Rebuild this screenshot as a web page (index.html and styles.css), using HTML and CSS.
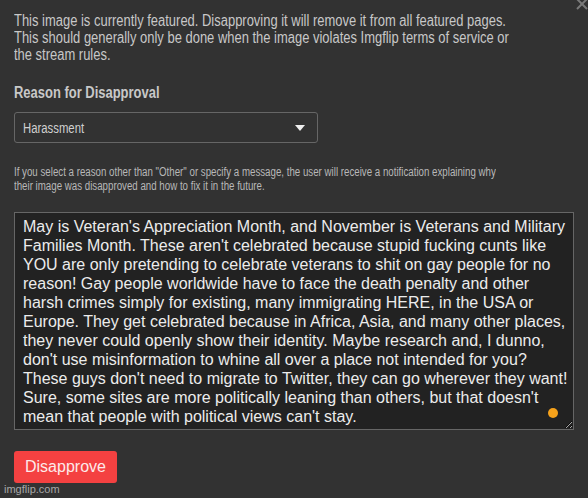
FILE: index.html
```html
<!DOCTYPE html>
<html lang="en">
<head>
    <meta charset="UTF-8">
    <title>Disapprove Image</title>
    <link rel="stylesheet" href="styles.css">
</head>
<body>
    <div class="popup">
        <svg class="close" width="14" height="14" viewBox="0 0 14 14"><path d="M2 2 L12 12 M12 2 L2 12" stroke="#7a7a7a" stroke-width="2"/></svg>

        <p class="intro narrow">This image is currently featured. Disapproving it will remove it from all featured pages.<br>This should generally only be done when the image violates Imgflip terms of service or<br>the stream rules.</p>

        <div class="label"><span class="narrow">Reason for Disapproval</span></div>
        <div class="select" role="listbox">
            <span class="narrow select-text">Harassment</span>
            <svg class="arrow" width="10" height="6" viewBox="0 0 10 6"><path d="M0 0 H10 L5 6 Z" fill="#eee"/></svg>
        </div>

        <p class="note narrow">If you select a reason other than "Other" or specify a message, the user will receive a notification explaining why<br>their image was disapproved and how to fix it in the future.</p>

        <div class="msg-wrap">
            <textarea class="msg">May is Veteran's Appreciation Month, and November is Veterans and Military Families Month. These aren't celebrated because stupid fucking cunts like YOU are only pretending to celebrate veterans to shit on gay people for no reason! Gay people worldwide have to face the death penalty and other harsh crimes simply for existing, many immigrating HERE, in the USA or Europe. They get celebrated because in Africa, Asia, and many other places, they never could openly show their identity. Maybe research and, I dunno, don't use misinformation to whine all over a place not intended for you? These guys don't need to migrate to Twitter, they can go wherever they want! Sure, some sites are more politically leaning than others, but that doesn't mean that people with political views can't stay.</textarea>
            <span class="dot"></span>
        </div>

        <button class="btn">Disapprove</button>
    </div>
    <div class="watermark">imgflip.com</div>
</body>
</html>
```

FILE: styles.css
```css
html, body { margin: 0; height: 100%; }
body { background: #323232; font-family: "Liberation Sans", Arial, sans-serif; color: #c8c8c8; overflow: hidden; position: relative; }

.popup { position: relative; padding: 12px 14px 0 14px; }
.close { position: absolute; top: -3px; right: -1px; }

/* no narrow face installed, so squeeze the regular one */
.narrow { display: block; transform: scaleX(0.81); transform-origin: 0 0; white-space: nowrap; }

.intro { margin: 0; font-size: 16px; line-height: 17px; }

.label { margin-top: 21px; font-size: 16px; line-height: 17px; font-weight: bold; color: #c8c8c8; }

.select { display: flex; align-items: center; justify-content: space-between; width: 304px; height: 31px; box-sizing: border-box; margin-top: 11px; padding: 0 12px 0 8px; border: 1px solid #666; border-radius: 3px; color: #d0d0d0; font-size: 14px; }

.note { margin: 22px 0 0 0; font-size: 12px; line-height: 14px; color: #b8b8b8; }

.msg-wrap { position: relative; margin-top: 19px; }
.msg { display: block; width: 100%; height: 218px; box-sizing: border-box; padding: 4px 5px 4px 8px; margin: 0; background: #222; border: 1px solid #666; border-radius: 0; color: #ececec; font-family: inherit; font-size: 16px; line-height: 19px; resize: both; outline: none; overflow: hidden; }
.dot { position: absolute; right: 16px; bottom: 12px; width: 10px; height: 10px; border-radius: 50%; background: #f6a21b; }

.btn { display: block; margin-top: 21px; height: 32px; padding: 0 11px; background: #f44141; border: none; border-radius: 3px; color: #fdeaea; font-family: inherit; font-size: 16px; }

.watermark { position: absolute; left: 4px; top: 483px; font-size: 11px; line-height: 13px; color: #a8a8a8; }
```
